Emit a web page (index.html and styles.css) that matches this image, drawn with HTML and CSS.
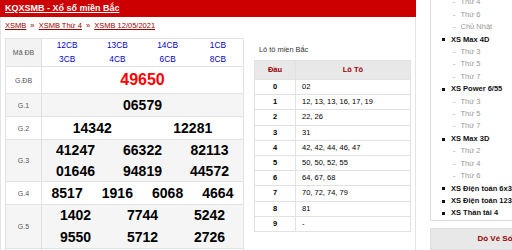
FILE: index.html
```html
<!DOCTYPE html>
<html lang="vi">
<head>
<meta charset="utf-8">
<title>KQXSMB - Xổ số miền Bắc</title>
<link rel="stylesheet" href="styles.css">
</head>
<body>
<div class="page">
  <div class="main">
    <h2 class="title"><a href="#">KQXSMB - Xổ số miền Bắc</a></h2>
    <div class="content">
      <div class="crumb"><a href="#">XSMB</a> <span class="sep">»</span> <a href="#">XSMB Thứ 4</a> <span class="sep">»</span> <a href="#">XSMB 12/05/2021</a></div>
      <div class="cols">
        <table class="kq">
          <colgroup><col class="c-label"><col></colgroup>
          <tr class="row-code">
            <td class="label">Mã ĐB</td>
            <td><div class="codes"><span>12CB</span><span>13CB</span><span>14CB</span><span>1CB</span><span>3CB</span><span>4CB</span><span>6CB</span><span>8CB</span></div></td>
          </tr>
          <tr>
            <td class="label">G.ĐB</td>
            <td><div class="nums special"><span>49650</span></div></td>
          </tr>
          <tr class="alt">
            <td class="label">G.1</td>
            <td><div class="nums"><span>06579</span></div></td>
          </tr>
          <tr>
            <td class="label">G.2</td>
            <td><div class="nums n2"><span>14342</span><span>12281</span></div></td>
          </tr>
          <tr class="alt">
            <td class="label">G.3</td>
            <td><div class="nums n3"><span>41247</span><span>66322</span><span>82113</span><span>01646</span><span>94819</span><span>44572</span></div></td>
          </tr>
          <tr>
            <td class="label">G.4</td>
            <td><div class="nums n4"><span>8517</span><span>1916</span><span>6068</span><span>4664</span></div></td>
          </tr>
          <tr class="alt">
            <td class="label">G.5</td>
            <td><div class="nums n3 g5"><span>1402</span><span>7744</span><span>5242</span><span>9550</span><span>5712</span><span>2726</span></div></td>
          </tr>
          <tr>
            <td class="label">G.6</td>
            <td><div class="nums"></div></td>
          </tr>
        </table>
        <div class="loto">
          <div class="loto-title">Lô tô miền Bắc</div>
          <table class="lt">
            <colgroup><col class="c-dau"><col></colgroup>
            <tr><th>Đầu</th><th>Lô Tô</th></tr>
            <tr><td class="dau">0</td><td>02</td></tr>
            <tr><td class="dau">1</td><td>12, 13, 13, 16, 17, 19</td></tr>
            <tr><td class="dau">2</td><td>22, 26</td></tr>
            <tr><td class="dau">3</td><td>31</td></tr>
            <tr><td class="dau">4</td><td>42, 42, 44, 46, 47</td></tr>
            <tr><td class="dau">5</td><td>50, 50, 52, 55</td></tr>
            <tr><td class="dau">6</td><td>64, 67, 68</td></tr>
            <tr><td class="dau">7</td><td>70, 72, 74, 79</td></tr>
            <tr><td class="dau">8</td><td>81</td></tr>
            <tr><td class="dau">9</td><td>-</td></tr>
          </table>
        </div>
      </div>
    </div>
  </div>
  <aside class="side">
    <div class="box menu">
      <ul>
        <li class="grp">XS Mega 6/45</li>
        <li class="sub">Thứ 4</li>
        <li class="sub">Thứ 6</li>
        <li class="sub">Chủ Nhật</li>
        <li class="grp">XS Max 4D</li>
        <li class="sub">Thứ 3</li>
        <li class="sub">Thứ 5</li>
        <li class="sub">Thứ 7</li>
        <li class="grp">XS Power 6/55</li>
        <li class="sub">Thứ 3</li>
        <li class="sub">Thứ 5</li>
        <li class="sub">Thứ 7</li>
        <li class="grp">XS Max 3D</li>
        <li class="sub">Thứ 2</li>
        <li class="sub">Thứ 4</li>
        <li class="sub">Thứ 6</li>
        <li class="grp">XS Điện toán 6x36</li>
        <li class="grp">XS Điện toán 123</li>
        <li class="grp">XS Thần tài 4</li>
      </ul>
    </div>
    <div class="box dove">
      <div class="dove-h">Dò Vé Số</div>
      <div class="dove-b"></div>
    </div>
  </aside>
</div>
</body>
</html>
```
FILE: styles.css
```css
html, body {
  margin: 0;
  padding: 0;
  overflow: hidden;
  background: #fff;
}
body {
  font-family: "Liberation Sans", Arial, sans-serif;
  color: #000;
}
.page {
  display: flex;
  width: 580px;
  align-items: flex-start;
}
.main {
  flex: 0 0 416px;
  width: 416px;
}
.title {
  margin: 0;
  height: 17px;
  line-height: 17px;
  background: #cc0000;
  padding-left: 5px;
  font-size: 9px;
  font-weight: bold;
}
.title a {
  color: #fff;
  text-decoration: underline;
}
.content {
  border-left: 1px solid #e4e4e4;
  border-right: 1px solid #e4e4e4;
  padding: 0 4px 40px;
}
.crumb {
  padding-top: 3px;
  line-height: 11px;
  font-size: 7.5px;
  color: #990000;
  margin-bottom: 7px;
}
.crumb a {
  color: #990000;
  text-decoration: underline;
}
.crumb .sep {
  padding: 0 2px;
}
.cols {
  display: flex;
  align-items: flex-start;
}
.kq {
  width: 239px;
  flex: 0 0 239px;
  border-collapse: collapse;
  table-layout: fixed;
}
.kq .c-label {
  width: 36px;
}
.kq td {
  border: 1px solid #e2e2e2;
  padding: 0;
  text-align: center;
  vertical-align: middle;
}
.kq tr.alt td {
  background: #f5f5f5;
}
.kq td.label {
  font-size: 7px;
  color: #555;
}
.kq .row-code td.label {
  background: #f3f3f3;
}
.codes {
  display: grid;
  grid-template-columns: repeat(4, 1fr);
  font-size: 8.3px;
  line-height: 13.5px;
  color: #0000cc;
}
.nums {
  display: grid;
  grid-template-columns: 1fr;
  font-size: 14px;
  font-weight: bold;
  line-height: 22px;
}
.nums.special {
  color: #ff0000;
  font-size: 16px;
  line-height: 26px;
}
.nums.n2 {
  grid-template-columns: repeat(2, 1fr);
}
.nums.n3 {
  grid-template-columns: repeat(3, 1fr);
  line-height: 20.5px;
}
.nums.g5 {
  line-height: 21.5px;
}
.nums.n4 {
  grid-template-columns: repeat(4, 1fr);
}
.loto {
  flex: 1;
  padding-left: 10px;
}
.loto-title {
  font-size: 7.4px;
  color: #333;
  line-height: 11px;
  margin: 6px 0 5px 5px;
}
.lt {
  width: 100%;
  border-collapse: collapse;
  table-layout: fixed;
  font-size: 7.5px;
}
.lt .c-dau {
  width: 41px;
}
.lt th {
  background: #e8e8e8;
  color: #990000;
  font-weight: bold;
  line-height: 18px;
  border: 1px solid #e2e2e2;
  padding: 0;
}
.lt td {
  border: 1px solid #e2e2e2;
  line-height: 14.2px;
  padding: 0 0 0 6px;
}
.lt td.dau {
  text-align: center;
  padding: 0;
  font-weight: bold;
}
.side {
  flex: 0 0 150px;
  padding-left: 14px;
}
.box {
  border: 1px solid #dedede;
  background: #fff;
  width: 128px;
}
.menu {
  margin-top: -17px;
}
.menu ul {
  list-style: none;
  margin: 0;
  padding: 0 0 0 11px;
  font-size: 7.5px;
  line-height: 12.4px;
}
.menu li.grp {
  font-weight: bold;
  color: #111;
  display: flex;
  align-items: center;
}
.menu li.grp::before {
  content: "";
  width: 3px;
  height: 3px;
  background: #111;
  margin-right: 6px;
}
.menu li.sub {
  color: #999;
  padding-left: 11px;
}
.menu li.sub::before {
  content: "-";
  margin-right: 5px;
}
.dove {
  margin-top: 7px;
}
.dove-h {
  background: #e8e8e8;
  color: #990000;
  font-weight: bold;
  font-size: 8px;
  line-height: 20px;
  text-align: center;
  border-bottom: 1px solid #dedede;
}
.dove-b {
  height: 30px;
}
```
